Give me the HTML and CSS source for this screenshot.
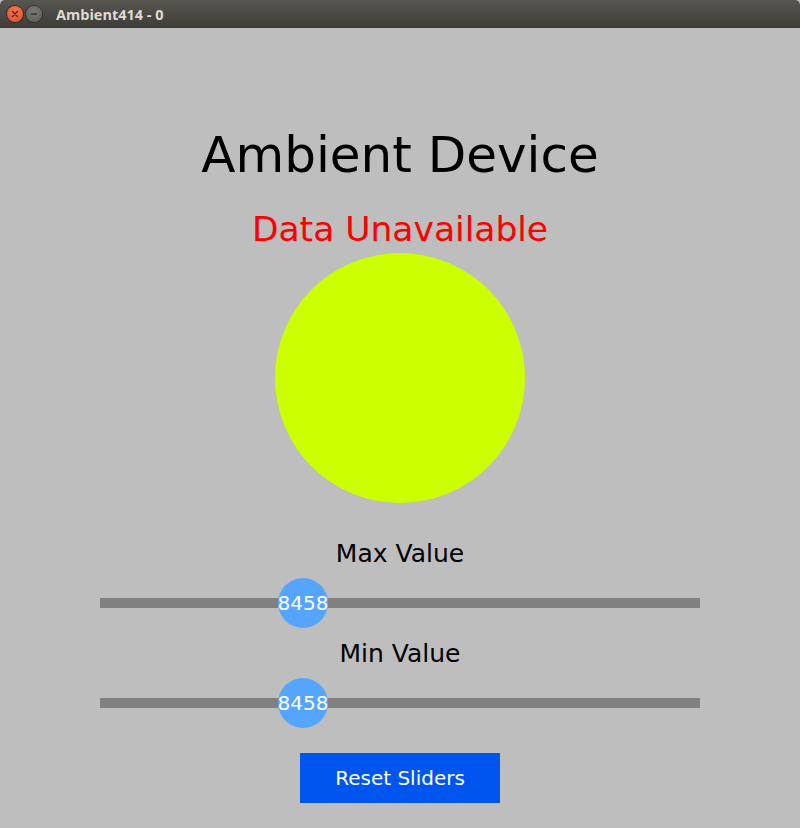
FILE: index.html
```html
<!DOCTYPE html>
<html>
<head>
<meta charset="utf-8">
<link rel="stylesheet" href="styles.css">
</head>
<body>
<div class="window">
  <div class="titlebar">
    <div class="btn close">
      <svg width="8" height="8" viewBox="0 0 8 8"><path d="M1.5 1.5 L6.5 6.5 M6.5 1.5 L1.5 6.5" stroke="#4a1a0a" stroke-width="1.4" stroke-linecap="round"/></svg>
    </div>
    <div class="btn minimize">
      <svg width="8" height="8" viewBox="0 0 8 8"><path d="M1 4 L7 4" stroke="#3a3a38" stroke-width="1.6"/></svg>
    </div>
    <div class="title">Ambient414 - 0</div>
  </div>
  <div class="content">
    <h1 class="heading">Ambient Device</h1>
    <div class="status">Data Unavailable</div>
    <div class="orb"></div>
    <div class="label label-max">Max Value</div>
    <div class="slider">
      <div class="track"></div>
      <div class="knob" style="left: 178px;">8458</div>
    </div>
    <div class="label label-min">Min Value</div>
    <div class="slider">
      <div class="track"></div>
      <div class="knob" style="left: 178px;">8458</div>
    </div>
    <button class="reset">Reset Sliders</button>
  </div>
</div>
</body>
</html>
```
FILE: styles.css
```css
html, body {
  margin: 0;
  padding: 0;
  background: #bebebe;
}
body {
  width: 800px;
  height: 828px;
  overflow: hidden;
  font-family: "DejaVu Sans", sans-serif;
}
.window {
  width: 800px;
  height: 828px;
  display: flex;
  flex-direction: column;
}
.titlebar {
  height: 28px;
  flex: none;
  background: linear-gradient(#57564f, #3d3c38);
  border-radius: 5px 5px 0 0;
  display: flex;
  align-items: center;
  padding-left: 7px;
  box-sizing: border-box;
}
.btn {
  width: 16px;
  height: 16px;
  border-radius: 50%;
  display: flex;
  align-items: center;
  justify-content: center;
  margin-right: 3px;
}
.close {
  background: radial-gradient(circle at 50% 35%, #f47a4f, #df4a1c);
  box-shadow: 0 0 0 1px #3a2a20;
}
.minimize {
  background: radial-gradient(circle at 50% 35%, #7b7a75, #5c5b56);
  box-shadow: 0 0 0 1px #34332f;
}
.title {
  margin-left: 11px;
  color: #dfdbd2;
  font-family: "Open Sans", "DejaVu Sans", sans-serif;
  font-weight: bold;
  font-size: 14.5px;
}
.content {
  flex: 1;
  background: #bebebe;
  display: flex;
  flex-direction: column;
  align-items: center;
}
.heading {
  margin: 97px 0 0 0;
  font-weight: normal;
  font-size: 50px;
  line-height: 60px;
  height: 60px;
  color: #000;
}
.status {
  margin-top: 24px;
  font-size: 34.5px;
  line-height: 40px;
  height: 40px;
  color: #ff0000;
}
.orb {
  margin-top: 4px;
  width: 250px;
  height: 250px;
  flex: none;
  border-radius: 50%;
  background: #ccff00;
}
.label {
  font-size: 25px;
  line-height: 30px;
  height: 30px;
  color: #000;
}
.label-max {
  margin-top: 36px;
}
.label-min {
  margin-top: 11px;
}
.slider {
  position: relative;
  width: 600px;
  height: 50px;
  flex: none;
  margin-top: 9px;
  display: flex;
  align-items: center;
}
.track {
  width: 600px;
  height: 10px;
  background: #808080;
}
.knob {
  position: absolute;
  top: 0;
  width: 50px;
  height: 50px;
  border-radius: 50%;
  background: #55a5ff;
  color: #fff;
  font-size: 20px;
  display: flex;
  align-items: center;
  justify-content: center;
}
.reset {
  margin-top: 25px;
  width: 200px;
  height: 50px;
  flex: none;
  border: none;
  background: #0055ee;
  color: #fff;
  font-family: "DejaVu Sans", sans-serif;
  font-size: 20px;
  padding: 0;
}
```
